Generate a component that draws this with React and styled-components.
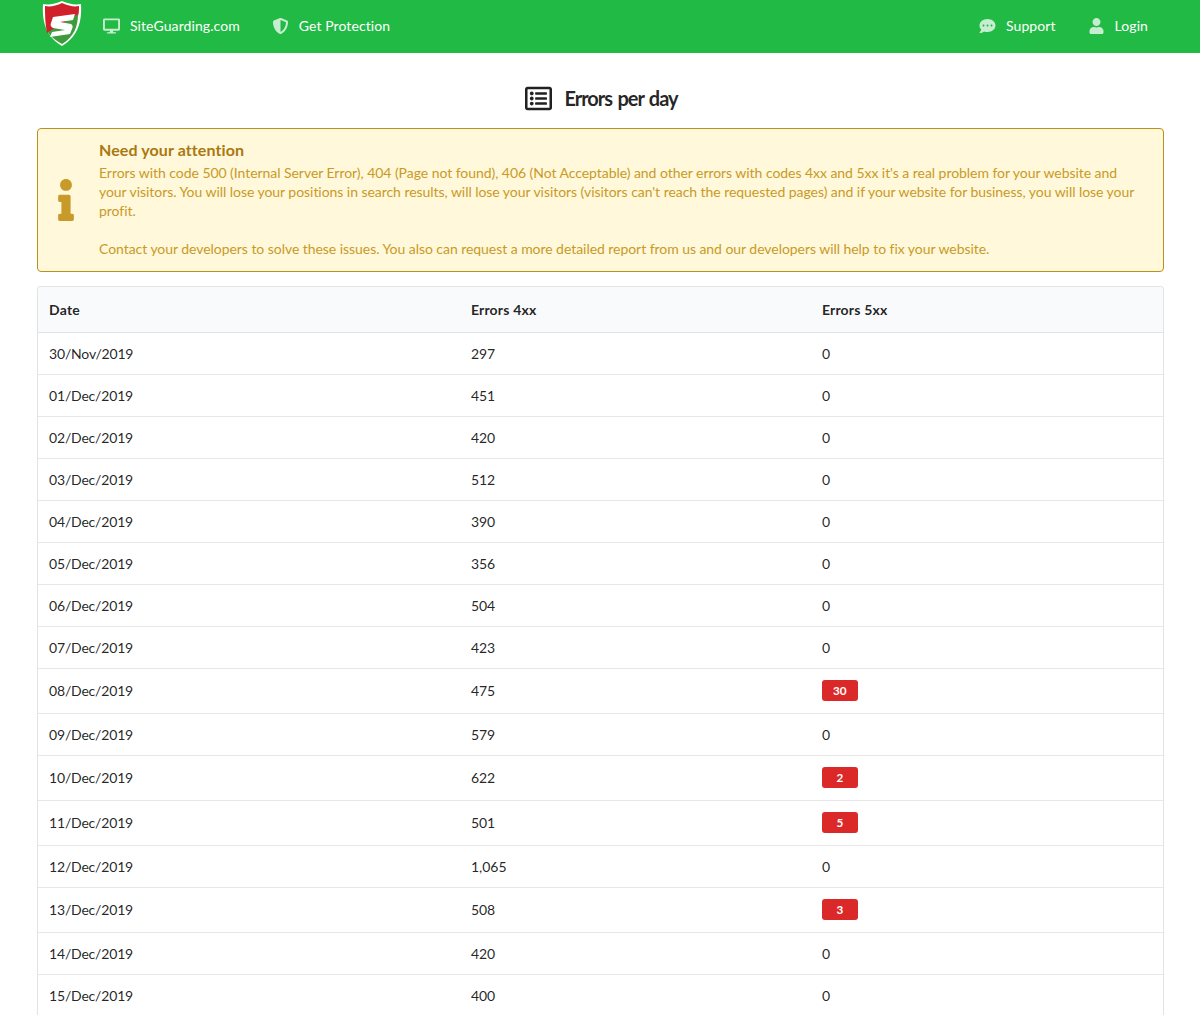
import React from 'react';
import styled, { createGlobalStyle } from 'styled-components';
import { FaDesktop, FaShieldAlt, FaCommentDots, FaUser, FaRegListAlt, FaInfo } from 'react-icons/fa';

const Global = createGlobalStyle`
  html, body { margin: 0; padding: 0; background: #fff; }
  body {
    font-family: Lato, "Helvetica Neue", Arial, sans-serif;
    font-size: 14px;
    line-height: 19px;
    color: rgba(0, 0, 0, 0.87);
    overflow: hidden;
  }
`;

const Navbar = styled.nav`
  height: 53px;
  background: #21ba45;
  display: flex;
  align-items: center;
  padding: 0 32px 2px 41px;
  box-sizing: border-box;
`;

const Logo = styled.svg`
  width: 42px;
  height: 46px;
  margin: 0 8px 0 0;
  align-self: flex-start;
`;

const NavItem = styled.a`
  display: flex;
  align-items: center;
  color: #fff;
  font-size: 14px;
  letter-spacing: 0.08px;
  padding: 0 15px 0 12px;
  margin-right: 5px;
  & svg {
    width: 17px;
    height: 16px;
    opacity: 0.75;
    margin-right: 10px;
  }
`;

const Spacer = styled.div`
  flex: 1;
`;

const Content = styled.main`
  padding: 0 36px 0 37px;
`;

const Title = styled.h2`
  margin: 0;
  box-sizing: border-box;
  height: 75px;
  padding: 15px 0 0 2px;
  display: flex;
  align-items: center;
  justify-content: center;
  gap: 12px;
  font-size: 20px;
  font-weight: 700;
  letter-spacing: -1px;
  word-spacing: 1.5px;
  color: rgba(0, 0, 0, 0.87);
  & svg {
    width: 27px;
    height: 27px;
  }
`;

const Alert = styled.div`
  display: flex;
  align-items: center;
  box-sizing: border-box;
  height: 144px;
  background: #fff8db;
  border: 1px solid #bf8f1c;
  border-radius: 4px;
  color: #c99a26;
  padding: 0 21px 0 0;
`;

const AlertIcon = styled.div`
  width: 61px;
  flex: none;
  display: flex;
  justify-content: center;
  & svg {
    width: 42px;
    height: 42px;
    color: #c79a2a;
    margin-left: -5px;
  }
`;

const AlertBody = styled.div`
  flex: 1;
  padding-bottom: 2px;
`;

const AlertHead = styled.div`
  font-size: 16px;
  font-weight: 700;
  letter-spacing: 0.1px;
  color: #a9780f;
  line-height: 20px;
  margin-bottom: 3px;
`;

const AlertText = styled.p`
  margin: 0;
  letter-spacing: -0.05px;
  & + & {
    margin-top: 19px;
  }
`;

const Table = styled.table`
  width: 100%;
  margin-top: 14px;
  border: 1px solid #e2e3e4;
  border-bottom: 0;
  border-radius: 4px 4px 0 0;
  border-collapse: separate;
  border-spacing: 0;
  table-layout: fixed;
`;

const Th = styled.th`
  background: #f9fafb;
  text-align: left;
  font-weight: 700;
  letter-spacing: 0.2px;
  height: 45px;
  padding: 0 11px;
  border-bottom: 1px solid #e2e3e4;
  &:first-child { border-top-left-radius: 4px; }
  &:last-child { border-top-right-radius: 4px; }
`;

const Td = styled.td`
  padding: 0 11px ${p => p.$tall ? 2 : 0}px;
  height: ${p => p.$tall ? 42 : 41}px;
  border-bottom: 1px solid #e6e7e8;
`;

const DateCell = styled(Td)`
  letter-spacing: -0.18px;
`;

const Badge = styled.span`
  display: inline-block;
  width: 36px;
  height: 21px;
  line-height: 21px;
  border-radius: 3px;
  background: #db2828;
  color: #fff;
  font-size: 11.7px;
  font-weight: 700;
  text-align: center;
  vertical-align: middle;
`;

const rows = [
  ['30/Nov/2019', '297', 0],
  ['01/Dec/2019', '451', 0],
  ['02/Dec/2019', '420', 0],
  ['03/Dec/2019', '512', 0],
  ['04/Dec/2019', '390', 0],
  ['05/Dec/2019', '356', 0],
  ['06/Dec/2019', '504', 0],
  ['07/Dec/2019', '423', 0],
  ['08/Dec/2019', '475', 30],
  ['09/Dec/2019', '579', 0],
  ['10/Dec/2019', '622', 2],
  ['11/Dec/2019', '501', 5],
  ['12/Dec/2019', '1,065', 0],
  ['13/Dec/2019', '508', 3],
  ['14/Dec/2019', '420', 0],
  ['15/Dec/2019', '400', 0],
];

const App = () => (
  <>
    <Global />
    <Navbar>
      <Logo viewBox="0 0 42 46">
        <path d="M21 1 C 28 4 34 5 40 4 C 41 20 38 36 21 46 C 4 36 1 20 2 4 C 8 5 14 4 21 1 Z" fill="#fff" />
        <path d="M21 3 C 28 6 33 7 38 6 C 38 10 38 13 37 16 L 6 33 C 4 24 4 14 4 6 C 9 7 15 6 21 3 Z" fill="#d0202c" />
        <path d="M37 14 C 37 26 33 37 21 44 C 14 40 9 36 7 32 Z" fill="#3e9a3a" />
        <path d="M12 17 L 34 14 L 32 20 L 19 22 L 30 24 C 32 25 32 27 31 29 L 29 34 L 9 37 L 11 32 L 24 30 L 12 28 C 10 27 9 25 10 23 Z" fill="#fff" />
      </Logo>
      <NavItem><FaDesktop />SiteGuarding.com</NavItem>
      <NavItem><FaShieldAlt />Get Protection</NavItem>
      <Spacer />
      <NavItem><FaCommentDots />Support</NavItem>
      <NavItem><FaUser />Login</NavItem>
    </Navbar>
    <Content>
      <Title><FaRegListAlt />Errors per day</Title>
      <Alert>
        <AlertIcon><FaInfo /></AlertIcon>
        <AlertBody>
          <AlertHead>Need your attention</AlertHead>
          <AlertText>Errors with code 500 (Internal Server Error), 404 (Page not found), 406 (Not Acceptable) and other errors with codes 4xx and 5xx it's a real problem for your website and your visitors. You will lose your positions in search results, will lose your visitors (visitors can't reach the requested pages) and if your website for business, you will lose your profit.</AlertText>
          <AlertText>Contact your developers to solve these issues. You also can request a more detailed report from us and our developers will help to fix your website.</AlertText>
        </AlertBody>
      </Alert>
      <Table>
        <colgroup>
          <col style={{ width: '37.5%' }} />
          <col style={{ width: '31.2%' }} />
          <col />
        </colgroup>
        <thead>
          <tr><Th>Date</Th><Th>Errors 4xx</Th><Th>Errors 5xx</Th></tr>
        </thead>
        <tbody>
          {rows.map(([date, e4, e5]) => (
            <tr key={date}>
              <DateCell $tall={e5 > 0}>{date}</DateCell>
              <Td $tall={e5 > 0}>{e4}</Td>
              <Td $tall={e5 > 0}>{e5 > 0 ? <Badge>{e5}</Badge> : 0}</Td>
            </tr>
          ))}
        </tbody>
      </Table>
    </Content>
  </>
);

export default App;
